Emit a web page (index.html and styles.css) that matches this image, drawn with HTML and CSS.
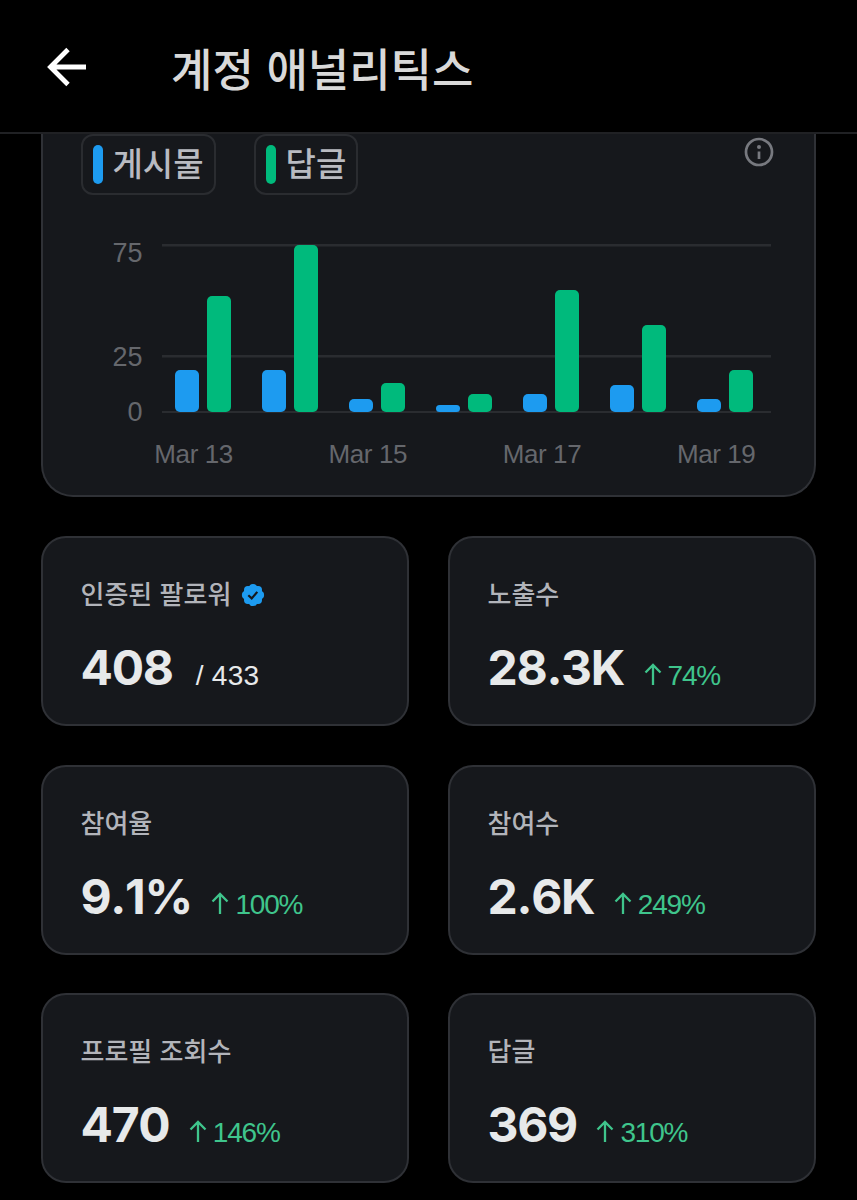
FILE: index.html
```html
<!DOCTYPE html>
<html lang="ko">

<head>
    <meta charset="UTF-8">
    <title>계정 애널리틱스</title>
    <link rel="stylesheet" href="styles.css">
</head>

<body>
    <header class="header">
        <svg class="back" viewBox="0 0 40 40" width="40" height="40">
            <path d="M39 20H4M21 2.500L3.500 20L21 37.500" />
        </svg>
        <h1>계정 애널리틱스</h1>
    </header>
    <main class="content">
        <section class="chart-card">
            <div class="legend">
                <span class="chip"><i class="posts"></i><span>게시물</span></span>
                <span class="chip"><i class="replies"></i><span>답글</span></span>
                <svg class="info" viewBox="0 0 30 30" width="30" height="30">
                    <circle cx="15" cy="15" r="13" />
                    <path d="M15 14.500v7.500" />
                    <circle class="dot" cx="15" cy="10" r="2" />
                </svg>
            </div>
            <div class="chart">
                <div class="y-axis">
                    <span>75</span>
                    <span>25</span>
                    <span>0</span>
                </div>
                <div class="plot">
                    <div class="day"><i class="posts" style="--v: 19"></i><i class="replies" style="--v: 52"></i></div>
                    <div class="day"><i class="posts" style="--v: 19"></i><i class="replies" style="--v: 75"></i></div>
                    <div class="day"><i class="posts" style="--v: 6"></i><i class="replies" style="--v: 13"></i></div>
                    <div class="day"><i class="posts" style="--v: 3"></i><i class="replies" style="--v: 8"></i></div>
                    <div class="day"><i class="posts" style="--v: 8"></i><i class="replies" style="--v: 55"></i></div>
                    <div class="day"><i class="posts" style="--v: 12"></i><i class="replies" style="--v: 39"></i></div>
                    <div class="day"><i class="posts" style="--v: 6"></i><i class="replies" style="--v: 19"></i></div>
                </div>
            </div>
            <div class="x-axis">
                <span>Mar 13</span>
                <span>Mar 15</span>
                <span>Mar 17</span>
                <span>Mar 19</span>
            </div>
        </section>
        <section class="stats">
            <div class="stat">
                <div class="label">인증된 팔로워
                    <svg class="badge" viewBox="0 0 24 24" width="24" height="24">
                        <g>
                            <circle cx="12" cy="12" r="9.800" />
                            <circle cx="12" cy="4.800" r="3.900" />
                            <circle cx="17.100" cy="6.900" r="3.900" />
                            <circle cx="19.200" cy="12" r="3.900" />
                            <circle cx="17.100" cy="17.100" r="3.900" />
                            <circle cx="12" cy="19.200" r="3.900" />
                            <circle cx="6.900" cy="17.100" r="3.900" />
                            <circle cx="4.800" cy="12" r="3.900" />
                            <circle cx="6.900" cy="6.900" r="3.900" />
                        </g>
                        <path d="M7.300 12.200L10.700 15.400L16.300 8.900" />
                    </svg>
                </div>
                <div class="value"><b>408</b><span class="total">/ 433</span></div>
            </div>
            <div class="stat">
                <div class="label">노출수</div>
                <div class="value"><b>28.3K</b><span class="up"><svg viewBox="0 0 18 22" width="18" height="22"><path d="M9 22V2M1.500 9.500L9 2L16.500 9.500" /></svg>74%</span></div>
            </div>
            <div class="stat">
                <div class="label">참여율</div>
                <div class="value"><b>9.1%</b><span class="up"><svg viewBox="0 0 18 22" width="18" height="22"><path d="M9 22V2M1.500 9.500L9 2L16.500 9.500" /></svg>100%</span></div>
            </div>
            <div class="stat">
                <div class="label">참여수</div>
                <div class="value"><b>2.6K</b><span class="up"><svg viewBox="0 0 18 22" width="18" height="22"><path d="M9 22V2M1.500 9.500L9 2L16.500 9.500" /></svg>249%</span></div>
            </div>
            <div class="stat">
                <div class="label">프로필 조회수</div>
                <div class="value"><b>470</b><span class="up"><svg viewBox="0 0 18 22" width="18" height="22"><path d="M9 22V2M1.500 9.500L9 2L16.500 9.500" /></svg>146%</span></div>
            </div>
            <div class="stat">
                <div class="label">답글</div>
                <div class="value"><b>369</b><span class="up"><svg viewBox="0 0 18 22" width="18" height="22"><path d="M9 22V2M1.500 9.500L9 2L16.500 9.500" /></svg>310%</span></div>
            </div>
        </section>
    </main>
</body>

</html>
```
FILE: styles.css
```css
* {
    box-sizing: border-box;
}

body {
    margin: 0;
    height: 1200px;
    overflow: hidden;
    background: #000;
    color: #e7e9ea;
    font-family: Inter, "Noto Sans CJK KR", sans-serif;
}

svg {
    flex: none;
    fill: none;
    stroke: currentColor;
}

.header {
    display: flex;
    align-items: center;
    height: 134px;
    padding: 1px 0 0 47px;
    border-bottom: 2px solid #202124;
}

.back {
    color: #fff;
    stroke-width: 4.800;
}

h1 {
    margin: 2px 0 0 84px;
    font: 500 45px/60px "Noto Sans CJK KR", sans-serif;
    color: #d9d9d9;
}

.content {
    padding: 0 41px 0 40.500px;
}

.chart-card {
    height: 363px;
    border: 2px solid #2f3136;
    border-top: 0;
    border-radius: 0 0 32px 32px;
    background: #16181c;
    padding: 0 38px;
}

.legend {
    display: flex;
    gap: 38px;
    height: 61px;
}

.chip {
    display: flex;
    align-items: center;
    gap: 10px;
    padding: 0 10px;
    border: 2px solid #2a2c30;
    border-radius: 12px;
    font: 500 33px/52px "Noto Sans CJK KR", sans-serif;
    color: #b9bbc1;
}

.chip span {
    padding-bottom: 5px;
}

.chip i {
    width: 10px;
    height: 39px;
    border-radius: 5px;
}

.posts {
    background: #1d9bf0;
}

.replies {
    background: #00ba7c;
}

.info {
    margin: 3px 2px 0 auto;
    color: #77797f;
    stroke-width: 2.700;
}

.info .dot {
    fill: currentColor;
    stroke: none;
}

.chart {
    display: flex;
    margin-top: 49px;
    height: 169px;
}

.y-axis,
.x-axis {
    font: 27px/30px "Liberation Sans", sans-serif;
    color: #65676c;
}

.y-axis {
    display: flex;
    flex-direction: column;
    width: 62px;
    text-align: right;
    margin: -6px 19px 0 0;
}

.y-axis span:nth-child(2) {
    margin: 74px 0 25px;
}

.plot {
    display: flex;
    width: 609px;
    height: 169px;
    padding-bottom: 1px;
    background:
        linear-gradient(#2a2c30, #2a2c30) 0 0 / 100% 2.500px no-repeat,
        linear-gradient(#2a2c30, #2a2c30) 0 111px / 100% 2.500px no-repeat,
        linear-gradient(#2a2c30, #2a2c30) 0 100% / 100% 2.500px no-repeat;
}

.day {
    display: flex;
    align-items: flex-end;
    gap: 8.500px;
    width: 87px;
    padding-left: 13px;
}

.day i {
    width: 24px;
    height: calc(var(--v) * 2.225px);
    border-radius: 5px;
}

.x-axis {
    display: flex;
    margin: 26px 0 0 26px;
    font-size: 26px;
    letter-spacing: -0.400px;
}

.x-axis span {
    flex: none;
    width: 174.200px;
    text-align: center;
}

.stats {
    display: grid;
    grid-template-columns: 1fr 1fr;
    gap: 38.500px;
    padding-top: 39px;
}

.stat {
    height: 190px;
    padding: 36px 38px;
    border: 2px solid #2f3136;
    border-radius: 25px;
    background: #16181c;
}

.label {
    display: flex;
    align-items: center;
    gap: 10px;
    height: 38px;
    font: 500 26px/38px "Noto Sans CJK KR", sans-serif;
    color: #b2b4ba;
}

.badge {
    margin-top: 4px;
}

.badge g {
    fill: #1d9bf0;
    stroke: none;
}

.badge path {
    stroke: #16181c;
    stroke-width: 2.200;
}

.value {
    display: flex;
    align-items: baseline;
    margin-top: 26px;
    line-height: 60px;
}

.value b {
    font-size: 48px;
    font-weight: 700;
    font-kerning: none;
    letter-spacing: -1.300px;
}

.total,
.up {
    font-family: "Liberation Sans", sans-serif;
    font-size: 28px;
}

.total {
    margin-left: 23px;
    letter-spacing: 0.300px;
}

.up {
    margin-left: 19.500px;
    color: #3fc58c;
    letter-spacing: -1.200px;
}

.up svg {
    margin-right: 6px;
    stroke-width: 2.300;
}
```
